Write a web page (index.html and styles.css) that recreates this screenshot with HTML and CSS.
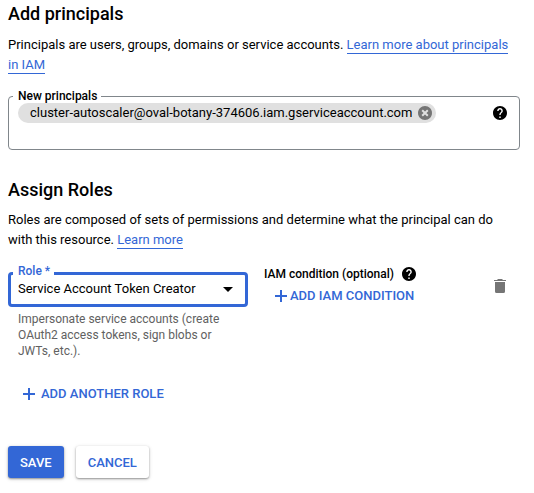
FILE: index.html
```html
<!DOCTYPE html>
<html lang="en">
<head>
<meta charset="utf-8">
<title>Add principals</title>
<link rel="stylesheet" href="styles.css">
</head>
<body>
<main class="panel">
  <h2 class="heading">Add principals</h2>
  <p class="intro">Principals are users, groups, domains or service accounts. <a class="link" href="#">Learn more about principals<br>in IAM</a></p>

  <fieldset class="field principals">
    <legend class="legend">New principals</legend>
    <div class="principals-row">
      <span class="chip"><span>cluster-autoscaler@oval-botany-374606.iam.gserviceaccount.com</span>
        <svg class="icon-small" viewBox="2 2 20 20"><path fill="#757575" d="M12 2C6.47 2 2 6.47 2 12s4.47 10 10 10 10-4.47 10-10S17.53 2 12 2z"/><path stroke="#e0e0e0" stroke-width="2.8" d="M8 8l8 8M16 8l-8 8"/></svg>
      </span>
      <svg class="icon-small" viewBox="2 2 20 20"><path d="M12 2C6.48 2 2 6.48 2 12s4.48 10 10 10 10-4.48 10-10S17.52 2 12 2zm1 17h-2v-2h2v2zm2.07-7.75l-.9.92C13.45 12.9 13 13.5 13 15h-2v-.5c0-1.1.45-2.1 1.17-2.83l1.24-1.26c.37-.36.59-.86.59-1.41 0-1.1-.9-2-2-2s-2 .9-2 2H8c0-2.21 1.79-4 4-4s4 1.79 4 4c0 .88-.36 1.68-.93 2.25z"/></svg>
    </div>
  </fieldset>

  <h2 class="heading roles-heading">Assign Roles</h2>
  <p class="intro roles-intro">Roles are composed of sets of permissions and determine what the principal can do<br>with this resource. <a class="link" href="#">Learn more</a></p>

  <section class="role-row">
    <div class="role-column">
      <fieldset class="field role">
        <legend class="legend role-legend">Role *</legend>
        <div class="select"><span>Service Account Token Creator</span><svg class="caret" viewBox="0 0 10 5"><path d="M0 0h10L5 5z"/></svg></div>
      </fieldset>
      <p class="hint">Impersonate service accounts (create<br>OAuth2 access tokens, sign blobs or<br>JWTs, etc.).</p>
    </div>
    <div class="condition">
      <div class="condition-title"><span>IAM condition (optional)</span>
        <svg class="icon-small" viewBox="2 2 20 20"><path d="M12 2C6.48 2 2 6.48 2 12s4.48 10 10 10 10-4.48 10-10S17.52 2 12 2zm1 17h-2v-2h2v2zm2.07-7.75l-.9.92C13.45 12.9 13 13.5 13 15h-2v-.5c0-1.1.45-2.1 1.17-2.83l1.24-1.26c.37-.36.59-.86.59-1.41 0-1.1-.9-2-2-2s-2 .9-2 2H8c0-2.21 1.79-4 4-4s4 1.79 4 4c0 .88-.36 1.68-.93 2.25z"/></svg>
      </div>
      <button class="text-button add-condition"><svg class="plus" viewBox="0 0 12 12"><path d="M5 0h2v5h5v2H7v5H5V7H0V5h5z"/></svg><span>ADD IAM CONDITION</span></button>
    </div>
    <svg class="trash" viewBox="0 0 12 14"><path d="M4 0h4l1 1h3v1H0V1h3zM1 3h10v9.500q0 1.500-1.500 1.500h-7Q1 14 1 12.500z"/></svg>
  </section>

  <button class="text-button add-role"><svg class="plus" viewBox="0 0 12 12"><path d="M5 0h2v5h5v2H7v5H5V7H0V5h5z"/></svg><span>ADD ANOTHER ROLE</span></button>

  <footer class="actions">
    <button class="button primary">SAVE</button>
    <button class="button">CANCEL</button>
  </footer>
</main>
</body>
</html>
```

FILE: styles.css
```css
* { box-sizing: border-box; }
body {
  margin: 0;
  background: #fff;
  color: #000;
  font: 400 13px/20px Roboto, sans-serif;
}
.panel { width: 534px; height: 493px; padding: 2px 14px 0 8px; overflow: hidden; }
.heading { margin: 0; font-size: 18px; font-weight: 500; line-height: 24px; }
.intro { margin: 9px 0 0; white-space: nowrap; }
.link { color: #3367d6; text-decoration: none; border-bottom: 1px solid #3367d6; padding-bottom: 1px; }

.field { margin: 0; min-width: 0; border: 1px solid #80868b; border-radius: 4px; }
.legend { padding: 0 4px 0 5px; margin: 0; font-size: 12px; font-weight: 500; line-height: 13px; white-space: nowrap; }
.principals { width: 512px; height: 60px; margin-top: 15px; padding: 0 12px 0 4px; }
.principals-row { display: flex; align-items: center; justify-content: space-between; padding-left: 5px; }
.chip { display: flex; align-items: center; width: 418px; height: 20px; padding: 0 4px 0 12px; border-radius: 10px; background: #e0e0e0; justify-content: space-between; white-space: nowrap; }
.icon-small { display: block; flex: none; width: 14px; height: 14px; }

.roles-heading { margin-top: 28px; }
.roles-intro { margin-top: 8px; }
.role-row { display: flex; align-items: flex-start; margin-top: 15px; }
.role-column { width: 240px; }
.role { height: 42px; padding: 0 12px 0 2px; border: 3px solid #3367d6; }
.role-legend { padding-bottom: 5px; line-height: 12px; color: #3367d6; }
.select { display: flex; align-items: center; justify-content: space-between; height: 14px; padding-left: 5px; white-space: nowrap; }
.caret { width: 10px; height: 5px; }
.hint { margin: 4px 0 0 10px; color: #616161; font-size: 12px; line-height: 16px; }
.condition { margin: -1px 0 0 16px; width: 230px; }
.condition-title { display: flex; align-items: center; gap: 8px; height: 20px; font-size: 12px; font-weight: 500; white-space: nowrap; }
.text-button { display: flex; align-items: center; gap: 6px; padding: 0; border: 0; background: none; color: #3367d6; font: 500 13px/20px Roboto, sans-serif; white-space: nowrap; }
.plus { width: 12px; height: 12px; fill: #3367d6; flex: none; }
.add-condition { gap: 3px; margin: 2px 0 0 11px; }
.trash { width: 12px; height: 14px; margin: 14px 0 0; fill: #757575; }
.add-role { margin: 25px 0 0 15px; }
.actions { display: flex; gap: 12px; margin-top: 42px; }
.button { height: 32px; padding: 2px 12px 0; border: 0; border-radius: 3px; background: #fff; color: #3367d6; font: 500 13px/20px Roboto, sans-serif; box-shadow: 0 1px 2px rgba(0, 0, 0, .35), 0 1px 4px rgba(0, 0, 0, .15); }
.primary { background: #3367d6; color: #fff; }
```
